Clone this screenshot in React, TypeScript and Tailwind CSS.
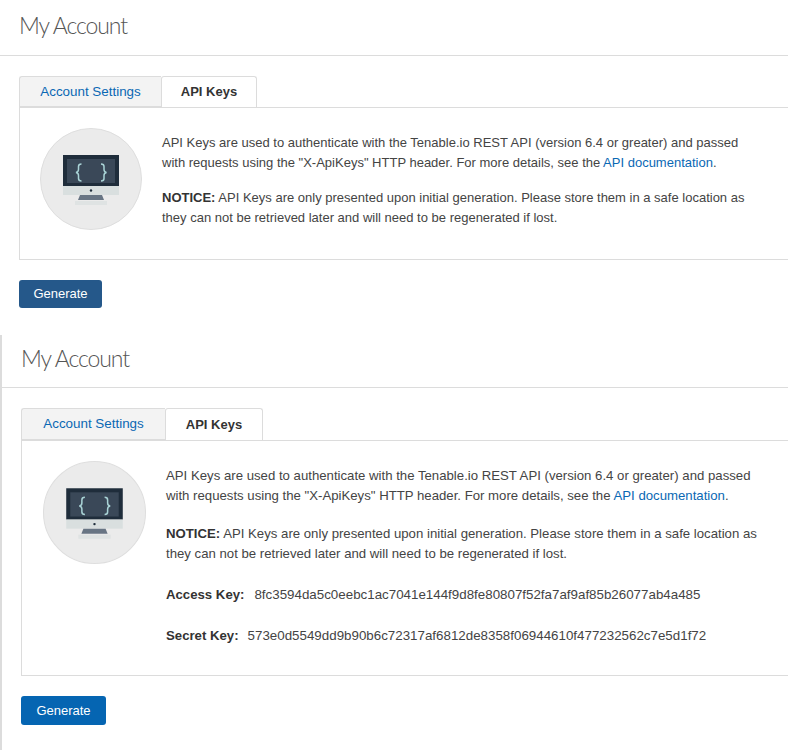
import { ReactNode } from "react";

function MonitorBadge({ className }: { className: string }) {
  return (
    <svg viewBox="0 0 102 102" className={className}>
      <circle cx="51" cy="51" r="50.5" fill="#ebebeb" stroke="#dedede" />
      <rect x="23" y="27" width="56" height="31" fill="#1f2d3b" />
      <rect x="27" y="31" width="48" height="24" fill="#3a4858" />
      <rect x="23" y="58" width="56" height="9" fill="#d9dfdf" />
      <circle cx="51" cy="62.5" r="1.2" fill="#1f2d3b" />
      <path d="M40 67h22l2 5H38z" fill="#687584" />
      <rect x="35" y="73" width="32" height="4" fill="#dfe3e3" />
      <path
        d="M41.500 36c-2.500 0-3 1-3 2.500v3c0 1.500-.7 2.600-2.500 3 1.800.4 2.500 1.500 2.500 3v3c0 1.500.5 2.500 3 2.500M61 36c2.500 0 3 1 3 2.500v3c0 1.500.7 2.600 2.500 3-1.800.4-2.500 1.500-2.500 3v3c0 1.500-.5 2.500-3 2.500"
        fill="none"
        stroke="#a9d3d6"
        strokeWidth="1.500"
      />
    </svg>
  );
}

function Tabs({ first, second }: { first: string; second: string }) {
  return (
    <div className="flex">
      <div className={`flex items-center justify-center rounded-tl-[3px] border border-r-0 border-[#dcdcdc] bg-[#f3f3f3] pt-[1px] text-[13.4px] text-[#0a68b4] ${first}`}>
        Account Settings
      </div>
      <div className={`relative -mb-px flex items-center justify-center rounded-t-[3px] border border-b-0 border-[#dcdcdc] bg-white text-[13px] font-bold text-[#333] ${second}`}>
        API Keys
      </div>
      <div className="flex-1" />
    </div>
  );
}

function Intro({ gap }: { gap: string }) {
  return (
    <>
      <p>
        API Keys are used to authenticate with the Tenable.io REST API (version 6.4 or greater) and passed
        <br />
        with requests using the "X-ApiKeys" HTTP header. For more details, see the{" "}
        <span className="text-[#0a68b4]">API documentation</span>.
      </p>
      <p className={gap}>
        <b className="font-bold text-[#333]">NOTICE:</b> API Keys are only presented upon initial generation. Please store them in a safe location as
        <br />
        they can not be retrieved later and will need to be regenerated if lost.
      </p>
    </>
  );
}

function Title({ children, className }: { children: ReactNode; className: string }) {
  return (
    <div className={`flex items-center border-b border-[#dcdcdc] font-['Lato',sans-serif] text-[23px] font-light tracking-[-1.1px] text-[#555] ${className}`}>
      {children}
    </div>
  );
}

export default function App() {
  return (
    <div className="h-[750px] w-[788px] overflow-hidden bg-white font-['Liberation_Sans',Arial,sans-serif] text-[#444]">
      {/* first capture, before the key is generated */}
      <div className="pl-[19px]">
        <div className="-ml-[19px]">
          <Title className="h-[56px] pb-[5px] pl-[19px]">My Account</Title>
        </div>
        <div className="pt-[20px]">
          <Tabs first="h-[31px] w-[142px]" second="h-[31px] w-[96px]" />
          <div className="-mr-px flex h-[153px] border border-[#dcdcdc] pl-[20px] pt-[20px]">
            <MonitorBadge className="h-[102px] w-[102px] shrink-0" />
            <div className="pl-[20px] pt-[5px] text-[13px] leading-[20px]">
              <Intro gap="mt-[15px]" />
            </div>
          </div>
        </div>
        <button className="mt-[20px] flex h-[28px] w-[83px] items-center justify-center rounded-[3px] bg-[#25588a] text-[13px] text-white">
          Generate
        </button>
      </div>

      {/* second capture, with keys */}
      <div className="mt-[27px] h-[415px] border-l-2 border-[#dcdcdc]">
        <Title className="h-[53px] pb-[6px] pl-[19px]">My Account</Title>
        <div className="pl-[19px] pt-[20px]">
          <Tabs first="h-[32px] w-[144px]" second="h-[32px] w-[98px]" />
          <div className="-mr-px flex h-[236px] border border-[#dcdcdc] pl-[21px] pt-[20px]">
            <MonitorBadge className="h-[103px] w-[103px] shrink-0" />
            <div className="pl-[20px] pt-[5px] text-[13.2px] leading-[20px]">
              <Intro gap="mt-[18px]" />
              <p className="mt-[21px]">
                <b className="font-bold text-[#333]">Access Key:</b>
                <span className="ml-[10px] text-[13.35px]">8fc3594da5c0eebc1ac7041e144f9d8fe80807f52fa7af9af85b26077ab4a485</span>
              </p>
              <p className="mt-[21px]">
                <b className="font-bold text-[#333]">Secret Key:</b>
                <span className="ml-[9px] text-[13.35px]">573e0d5549dd9b90b6c72317af6812de8358f06944610f477232562c7e5d1f72</span>
              </p>
            </div>
          </div>
          <button className="mt-[20px] flex h-[29px] w-[85px] items-center justify-center rounded-[3px] bg-[#0565b2] text-[13px] text-white">
            Generate
          </button>
        </div>
      </div>
    </div>
  );
}
